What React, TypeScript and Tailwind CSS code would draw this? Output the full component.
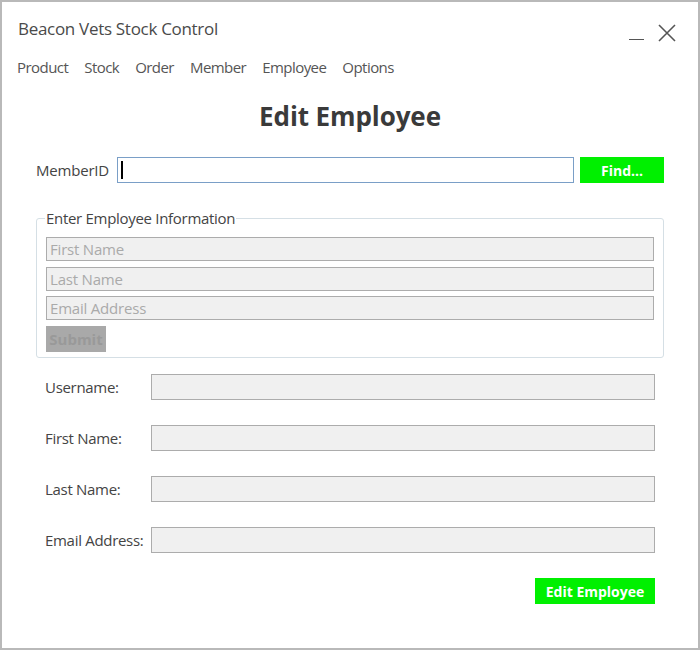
import React from "react";

const font = { fontFamily: '"Open Sans", "Noto Sans", sans-serif' };

const Field: React.FC<{ label: string; mt: string }> = ({ label, mt }) => (
  <div className={`flex items-center ${mt}`}>
    <span className="w-[106px] text-[15px] text-[#444] tracking-[-0.3px]">{label}</span>
    <div className="h-[26px] w-[504px] border border-[#acacac] bg-[#f0f0f0]"></div>
  </div>
);

const Placeholder: React.FC<{ text: string; mt: string }> = ({ text, mt }) => (
  <div className={`flex h-[24px] items-center border border-[#acacac] bg-[#f0f0f0] px-[3px] text-[15px] text-[#aaaaaa] tracking-[-0.2px] ${mt}`}>
    {text}
  </div>
);

export default function App() {
  return (
    <div className="relative h-[650px] w-[700px] border-2 border-[#b9b9b9] bg-white" style={font}>
      {/* title bar */}
      <div className="flex h-[56px] items-start justify-between">
        <div className="ml-[16px] mt-[16px] text-[17px] leading-[22px] text-[#4a4a4a] tracking-[-0.3px]">
          Beacon Vets Stock Control
        </div>
        <div className="mr-[22px] mt-[22px] flex items-end gap-[14px]">
          <div className="mb-[2px] h-[1.5px] w-[15px] bg-[#555]"></div>
          <svg width="18" height="18" viewBox="0 0 18 18" stroke="#555" strokeWidth="1.6">
            <path d="M1 1L17 17M17 1L1 17" />
          </svg>
        </div>
      </div>

      {/* menu */}
      <div className="ml-[15px] -mt-[1px] flex gap-[16px] text-[15px] leading-[20px] text-[#555] tracking-[-0.55px]">
        <span>Product</span>
        <span>Stock</span>
        <span>Order</span>
        <span>Member</span>
        <span>Employee</span>
        <span>Options</span>
      </div>

      <h1 className="mt-[22px] text-center text-[26px] font-bold leading-[34px] text-[#3a3a3a] tracking-[-0.1px]">
        Edit Employee
      </h1>

      {/* member id */}
      <div className="ml-[34px] mt-[24px] flex items-center">
        <span className="w-[81px] text-[15px] text-[#444] tracking-[-0.2px]">MemberID</span>
        <div className="flex h-[26px] w-[457px] items-center border border-[#7a9fc7] pl-[3px]">
          <div className="h-[18px] w-[1.5px] bg-black"></div>
        </div>
        <button className="ml-[6px] h-[26px] w-[84px] bg-[#00f000] text-[14px] font-bold text-white">
          Find...
        </button>
      </div>

      {/* group box */}
      <fieldset className="ml-[34px] mt-[25px] w-[628px] rounded-[3px] border border-[#d5dfe5] px-[9px] pb-[5px]">
        <legend className="-ml-[1px] px-[1px] text-[15px] leading-[20px] text-[#444] tracking-[-0.3px]">
          Enter Employee Information
        </legend>
        <Placeholder text="First Name" mt="mt-[9px]" />
        <Placeholder text="Last Name" mt="mt-[6px]" />
        <Placeholder text="Email Address" mt="mt-[5px]" />
        <button className="mt-[6px] h-[26px] w-[60px] bg-[#a9a9a9] text-[15px] font-bold text-[#999]">
          Submit
        </button>
      </fieldset>

      {/* details */}
      <div className="ml-[43px] mt-[16px]">
        <Field label="Username:" mt="mt-0" />
        <Field label="First Name:" mt="mt-[25px]" />
        <Field label="Last Name:" mt="mt-[25px]" />
        <Field label="Email Address:" mt="mt-[25px]" />
      </div>

      <div className="mr-[43px] mt-[25px] flex justify-end">
        <button className="h-[26px] w-[120px] bg-[#00f000] text-[14px] font-bold text-white">
          Edit Employee
        </button>
      </div>
    </div>
  );
}
